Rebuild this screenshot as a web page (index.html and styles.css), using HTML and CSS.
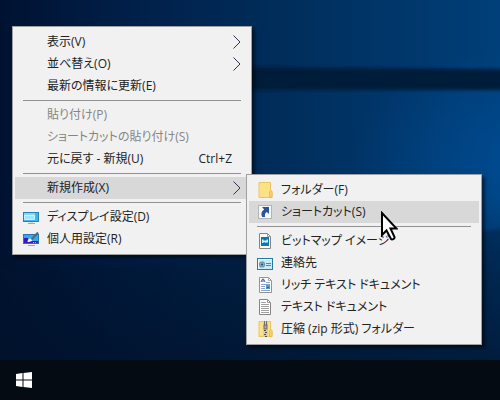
FILE: index.html
```html
<!DOCTYPE html>
<html lang="ja">
<head>
    <meta charset="UTF-8">
    <meta name="viewport" content="width=device-width, initial-scale=1.0">
    <title>デスクトップ</title>
    <link rel="stylesheet" href="styles.css">
</head>
<body>
    <main class="desktop">
        <svg class="wallpaper" viewBox="0 0 500 360" preserveAspectRatio="none" aria-hidden="true">
            <defs>
                <linearGradient id="base" x1="0" y1="0" x2="1" y2="0">
                    <stop offset="0" stop-color="#001231"/>
                    <stop offset="0.25" stop-color="#001f48"/>
                    <stop offset="0.6" stop-color="#002f5d"/>
                    <stop offset="1" stop-color="#003f79"/>
                </linearGradient>
                <linearGradient id="fade" x1="0" y1="0" x2="0" y2="1">
                    <stop offset="0.55" stop-color="#001027" stop-opacity="0"/>
                    <stop offset="1" stop-color="#001027" stop-opacity="0.6"/>
                </linearGradient>
                <radialGradient id="glow">
                    <stop offset="0" stop-color="#0052a0" stop-opacity="0.6"/>
                    <stop offset="1" stop-color="#0052a0" stop-opacity="0"/>
                </radialGradient>
                <filter id="soft"><feGaussianBlur stdDeviation="1.5"/></filter>
            </defs>
            <rect width="500" height="360" fill="url(#base)"/>
            <ellipse cx="520" cy="160" rx="170" ry="110" fill="url(#glow)"/>
            <path d="M245 67L510 69V90H245Z" fill="#001a3b" filter="url(#soft)"/>
            <path d="M-10 270L250 258L510 228V370H-10Z" fill="#001633" opacity="0.35" filter="url(#soft)"/>
            <rect width="500" height="360" fill="url(#fade)"/>
        </svg>

        <ul class="menu context-menu">
            <li class="item">
                <button type="button"><span class="icon"></span>表示(V)<svg class="arrow" viewBox="0 0 8 14"><path d="M0.5 0.5L7 7L0.5 13.5"/></svg></button>
            </li>
            <li class="item">
                <button type="button"><span class="icon"></span>並べ替え(O)<svg class="arrow" viewBox="0 0 8 14"><path d="M0.5 0.5L7 7L0.5 13.5"/></svg></button>
            </li>
            <li class="item">
                <button type="button"><span class="icon"></span>最新の情報に更新(E)</button>
            </li>
            <li class="separator"></li>
            <li class="item">
                <button type="button" disabled><span class="icon"></span>貼り付け(P)</button>
            </li>
            <li class="item">
                <button type="button" disabled><span class="icon"></span>ショートカットの貼り付け(S)</button>
            </li>
            <li class="item">
                <button type="button"><span class="icon"></span>元に戻す - 新規(U)<span class="shortcut">Ctrl+Z</span></button>
            </li>
            <li class="separator"></li>
            <li class="item">
                <button type="button" class="active"><span class="icon"></span>新規作成(X)<svg class="arrow" viewBox="0 0 8 14"><path d="M0.5 0.5L7 7L0.5 13.5"/></svg></button>

                <ul class="menu submenu">
                    <li class="item">
                        <button type="button">
                            <svg class="icon" viewBox="0 0 16 16">
                                <path d="M2 0.5H13.5V8.5L15 9.5V15.5H2Z" fill="#fde189" stroke="#ecc65b"/>
                                <path d="M12.5 15V9.5L13.5 8.5L15 9.5V15.5Z" fill="#f8d66d" stroke="#dfb53f" stroke-width="0.7"/>
                            </svg>フォルダー(F)
                        </button>
                    </li>
                    <li class="item">
                        <button type="button" class="active">
                            <svg class="icon" viewBox="0 0 16 16">
                                <rect x="1.5" y="1.5" width="13" height="13" fill="#f6f6f6" stroke="#b4b4b4"/>
                                <path d="M5 3H12V10L9.8 8C8.2 9 7.7 10.3 8 13H5.2C3.6 10 4.4 7.3 7.2 5.5Z" fill="#27549b"/>
                            </svg>ショートカット(S)
                        </button>
                    </li>
                    <li class="separator"></li>
                    <li class="item">
                        <button type="button">
                            <svg class="icon" viewBox="0 0 16 16">
                                <path d="M2.5 0.5H10.5L13.5 3.5V15.5H2.5Z" fill="#fff" stroke="#858585"/>
                                <path d="M10.5 0.5V3.5H13.5" fill="none" stroke="#9a9a9a"/>
                                <rect x="4" y="4" width="8" height="9" fill="#0e76b4"/>
                                <path d="M5 10V7L6 6L7 8L8 7L9 8L10 6L11 7V10L10 9L9 10L7 9L6 10Z" fill="#d9effb"/>
                            </svg>ビットマップ イメージ
                        </button>
                    </li>
                    <li class="item">
                        <button type="button">
                            <svg class="icon" viewBox="0 0 16 16">
                                <rect x="0.5" y="3.5" width="15" height="11" fill="#c9e9f7" stroke="#277aa5"/>
                                <path d="M1.5 13.5V4.5H14.5" fill="none" stroke="#eefaff"/>
                                <rect x="2.5" y="7" width="5" height="5" rx="1.5" fill="#87a9ba" stroke="#517b91" stroke-width="0.7"/>
                                <path d="M4 9.5H6M5 8.5V10.5" stroke="#285b78"/>
                                <path d="M9 8.5H14M9 10.5H14" stroke="#4689aa"/>
                            </svg>連絡先
                        </button>
                    </li>
                    <li class="item">
                        <button type="button">
                            <svg class="icon" viewBox="0 0 16 16">
                                <path d="M2.5 0.5H11.5L14.5 3.5V15.5H2.5Z" fill="#fff" stroke="#929292"/>
                                <path d="M11.5 0.5V3.5H14.5" fill="none" stroke="#aaa"/>
                                <path d="M4 5L5.5 2H6.5L8 5M5 4H7" fill="none" stroke="#3456b6"/>
                                <path d="M9 5.5H13M4 7.5H13M4 9.5H8M4 11.5H8M4 13.5H13" stroke="#8ca4cc"/>
                                <rect x="9" y="8" width="4" height="4" fill="#4e9ccb"/>
                                <path d="M10 10H12V11H10Z" fill="#285d98"/>
                            </svg>リッチ テキスト ドキュメント
                        </button>
                    </li>
                    <li class="item">
                        <button type="button">
                            <svg class="icon" viewBox="0 0 16 16">
                                <path d="M2.5 0.5H10.5L13.5 3.5V15.5H2.5Z" fill="#fff" stroke="#858585"/>
                                <path d="M10.5 0.5V3.5H13.5" fill="none" stroke="#9a9a9a"/>
                                <path d="M4 3.5H9M4 5.5H12M4 7.5H12M4 9.5H12M4 11.5H12M4 13.5H12" stroke="#a0a0a0"/>
                            </svg>テキスト ドキュメント
                        </button>
                    </li>
                    <li class="item">
                        <button type="button">
                            <svg class="icon" viewBox="0 0 16 16">
                                <path d="M2 0.5H13.5V8.5L15 9.5V15.5H2Z" fill="#fde189" stroke="#ecc65b"/>
                                <path d="M12.5 15V9.5L13.5 8.5L15 9.5V15.5Z" fill="#f8d66d" stroke="#dfb53f" stroke-width="0.7"/>
                                <rect x="6" y="0" width="5" height="16" fill="#d9ceaa"/>
                                <path d="M7.5 0V5M9.5 0V5" stroke="#77736a"/>
                                <rect x="7" y="4" width="3" height="4" fill="#aaa" stroke="#555" stroke-width="0.7"/>
                                <path d="M7 9H9V10H7ZM8 11H10V12H8ZM7 13H9V14H7ZM8 15H10V16H8Z" fill="#4f4d48"/>
                            </svg>圧縮 (zip 形式) フォルダー
                        </button>
                    </li>
                </ul>
            </li>
            <li class="separator"></li>
            <li class="item">
                <button type="button">
                    <svg class="icon" viewBox="0 0 16 16">
                        <rect x="0.5" y="3.5" width="15" height="9" fill="#43b5e8" stroke="#2682b4"/>
                        <path d="M1 4H12V10H1Z" fill="#83d8f8"/>
                        <path d="M1.5 6.5H11.5V10.5H1.5Z" fill="#a3e4fb" stroke="#c9f1fc"/>
                        <path d="M5 14.5H12" stroke="#9cabb3"/>
                        <path d="M7 13.5H10" stroke="#d0d6da"/>
                    </svg>ディスプレイ設定(D)
                </button>
            </li>
            <li class="item">
                <button type="button">
                    <svg class="icon" viewBox="0 0 16 16">
                        <rect x="0.5" y="3.5" width="15" height="9" fill="#3aa9ea" stroke="#2377b4"/>
                        <path d="M1 7H5V10H15V12H1Z" fill="#3d18b8"/>
                        <path d="M4.5 11C4.5 8 7 6.5 9 8C10 10 8 11 4.5 11Z" fill="#e6f3fb"/>
                        <path d="M8.5 8.5L15 1.5" stroke="#566776" stroke-width="2"/>
                        <path d="M10 11.5H11M12 11.5H13" stroke="#7fd4ff"/>
                        <path d="M5 14.5H12" stroke="#9cabb3"/>
                    </svg>個人用設定(R)
                </button>
            </li>
        </ul>

        <svg class="cursor" viewBox="0 0 18 30" aria-hidden="true">
            <path d="M2 2V24L6.5 19.5L11 28C12 29 15 28 14.5 26L10.5 17.5H16.5Z"/>
        </svg>
    </main>

    <footer class="taskbar">
        <button type="button" class="start" aria-label="スタート">
            <svg viewBox="0 0 16 16">
                <path d="M0 2L6.5 1V7.5H0ZM7.5 1L16 0V7.5H7.5ZM0 8.5H6.5V15L0 14ZM7.5 8.5H16V16L7.5 15Z"/>
            </svg>
        </button>
    </footer>
</body>
</html>
```

FILE: styles.css
```css
body {
    display: flex;
    flex-direction: column;
    min-height: 100vh;
    margin: 0;
    background-color: #001231;
    font-family: "Open Sans", "Noto Sans CJK JP", sans-serif;
    font-size: 12px;
}
.desktop {
    position: relative;
    flex: 1;
    overflow: hidden;
}
.wallpaper {
    position: absolute;
    width: 100%;
    height: 100%;
}

/* メニュー */
.menu {
    position: absolute;
    box-sizing: border-box;
    margin: 0;
    padding: 4px 2px;
    border: 1px solid #a0a0a0;
    background-color: #f1f1f1;
    box-shadow: 3px 3px 3px rgba(0,0,0,0.5);
    list-style: none;
}
.context-menu {
    top: 26px;
    left: 12px;
    width: 240px;
}
.submenu {
    top: -3px;
    left: calc(100% - 3px);
    width: 236px;
    z-index: 1;
}
.item {
    position: relative;
}
.item button {
    display: flex;
    align-items: center;
    width: 100%;
    height: 22px;
    padding: 0 8px;
    border: none;
    background: none;
    color: #222;
    font: inherit;
    font-feature-settings: "palt", "kern";
    line-height: 22px;
    text-align: left;
    white-space: nowrap;
}
.item button:hover,
.item button.active {
    background-color: #d8d8d8;
}
.item button:disabled {
    background: none;
    color: #858585;
}
.icon {
    flex: none;
    width: 16px;
    height: 16px;
    margin-right: 8px;
}
.arrow {
    width: 8px;
    height: 14px;
    margin-left: auto;
    fill: none;
    stroke: #33334d;
}
.shortcut {
    margin-left: auto;
    margin-right: 9px;
}
.separator {
    height: 1px;
    margin: 3px 8px;
    background-color: #919191;
}

.cursor {
    position: absolute;
    top: 211px;
    left: 380px;
    z-index: 2;
    width: 18px;
    height: 30px;
    fill: #fff;
    stroke: #000;
    stroke-width: 2;
}

/* タスクバー */
.taskbar {
    display: flex;
    height: 40px;
    background-color: #050b13;
}
.start {
    display: flex;
    align-items: center;
    justify-content: center;
    width: 48px;
    padding: 0;
    border: none;
    background: none;
}
.start svg {
    width: 16px;
    height: 16px;
    fill: #fff;
}
```
